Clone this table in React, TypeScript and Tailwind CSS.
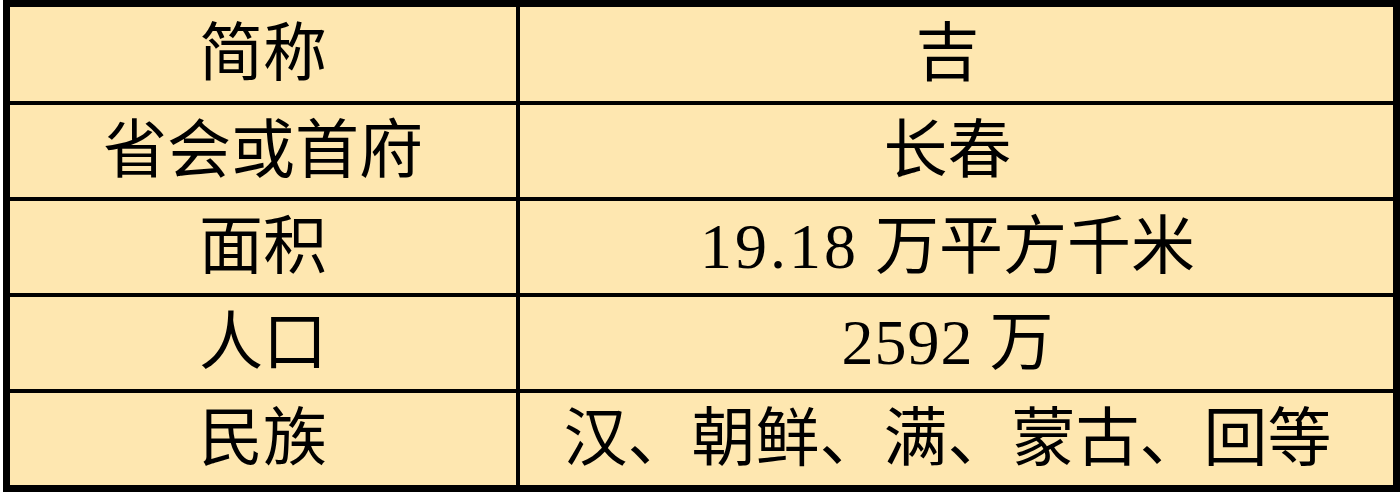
import React from "react";

const rows: { h: string; left: React.ReactNode; right: React.ReactNode }[] = [
  { h: "h-[98px]", left: "简称", right: "吉" },
  { h: "h-[96px]", left: "省会或首府", right: "长春" },
  {
    h: "h-[96px]",
    left: "面积",
    right: (
      <>
        <span className="tracking-[3px]">19.18</span>
        <span>&nbsp;万平方千米</span>
      </>
    ),
  },
  {
    h: "h-[96px]",
    left: "人口",
    right: (
      <>
        <span className="tracking-[1px]">2592</span>
        <span>&nbsp;万</span>
      </>
    ),
  },
  { h: "flex-1", left: "民族", right: "汉、朝鲜、满、蒙古、回等" },
];

export default function App() {
  return (
    <div className="w-[1400px] h-[492px] bg-white">
      <div
        className="ml-[3px] w-[1397px] h-[492px] border-[7px] border-black bg-[#fee7b0] flex flex-col text-black text-[64px] leading-none"
        style={{ fontFamily: '"Liberation Serif", "Noto Sans CJK SC", serif' }}
      >
        {rows.map((r, i) => (
          <div
            key={i}
            className={`flex ${r.h} ${i < rows.length - 1 ? "border-b-4 border-black" : ""}`}
          >
            <div className="w-[510px] shrink-0 border-r-4 border-black flex items-center justify-center">
              {r.left}
            </div>
            <div className="flex-1 flex items-center justify-center pr-[18px] whitespace-pre">
              {r.right}
            </div>
          </div>
        ))}
      </div>
    </div>
  );
}
